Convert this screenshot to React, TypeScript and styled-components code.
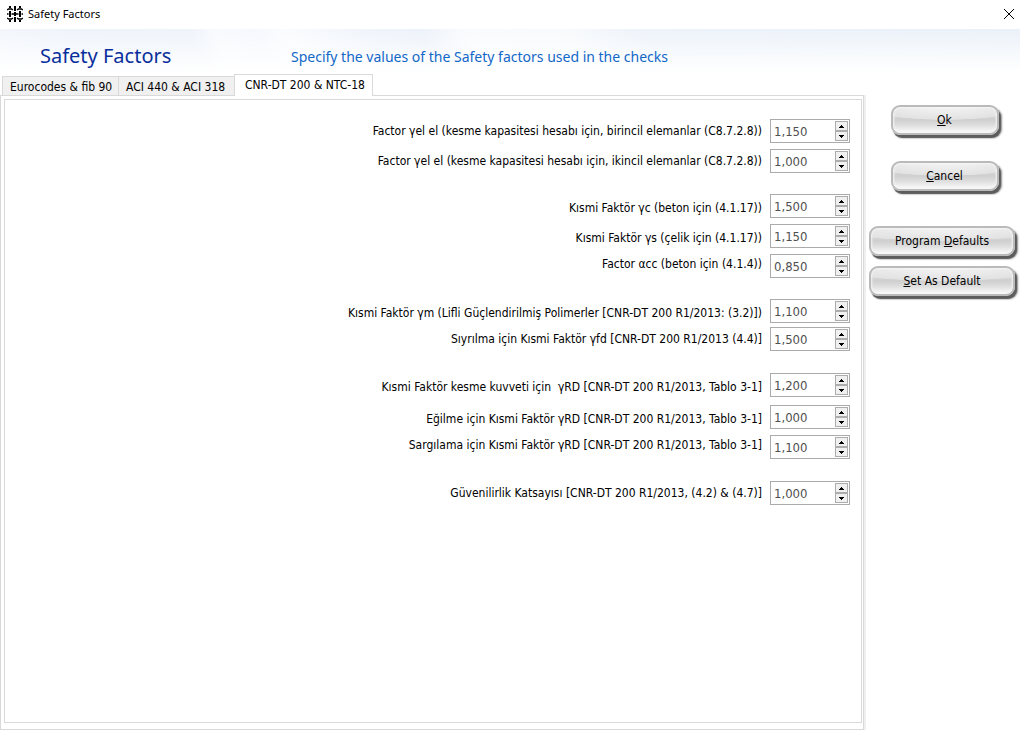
import React, { useId, useState } from "react";
import styled, { createGlobalStyle } from "styled-components";

const uiFont = '"DejaVu Sans Condensed", "DejaVu Sans", sans-serif';
const titleFont = '"Noto Sans", "Open Sans", sans-serif';
const frame = "#d9d9d9";

const GlobalStyle = createGlobalStyle`
  *, *::before, *::after { box-sizing: border-box; }
  body {
    margin: 0;
    background: #fff;
    color: #000;
    font-family: ${uiFont};
    font-size: 12px;
  }
  button, input { font: inherit; color: inherit; margin: 0; }
`;

const Dialog = styled.div`
  display: flex;
  flex-direction: column;
  min-height: 100vh;
`;

const TitleBar = styled.header`
  display: flex;
  align-items: center;
  gap: 5px;
  height: 29px;
  padding: 0 5px 2px 7px;
  font-family: ${titleFont};
  font-size: 11px;
`;

const TitleText = styled.span`
  flex: 1;
`;

const CloseButton = styled.button`
  display: flex;
  padding: 0;
  border: 0;
  background: none;
`;

const Banner = styled.div`
  display: flex;
  align-items: center;
  height: 45px;
  padding: 8px 40px 0;
  font-family: ${titleFont};
  background:
    linear-gradient(to bottom, transparent, #fff 95%),
    linear-gradient(65deg, #f4f7fc 0, #eff4fb 80px, #eef3fa 190px, #f8fafe 212px, #f5f8fd 250px, #fafcfe 275px, #f0f4fb 350px, #edf2fa 400px, #fafbfe 440px, #f8fafd 530px, #edf3fa 600px, #ebf1f9 100%);
`;

const Heading = styled.h1`
  margin: 0;
  width: 251px;
  color: #0a2f9c;
  font-size: 20px;
  line-height: 28px;
  font-weight: 400;
`;

const Hint = styled.p`
  margin: 0;
  padding-top: 2px;
  color: #1268c8;
  font-size: 14px;
  line-height: 20px;
`;

const Body = styled.div`
  display: grid;
  grid-template-columns: minmax(0, 1fr) 154px;
  flex: 1;
`;

const Pages = styled.main`
  display: flex;
  flex-direction: column;
`;

const TabList = styled.div`
  display: flex;
  align-items: flex-end;
  height: 21px;
  padding-left: 2px;
`;

const Tab = styled.button<{ $active: boolean }>`
  min-width: ${(p) => (p.$active ? 139 : 116)}px;
  height: ${(p) => (p.$active ? 22 : 19)}px;
  margin-bottom: ${(p) => (p.$active ? -1 : 0)}px;
  padding: ${(p) => (p.$active ? "0 3px 1px 10px" : "2px 3px 0 7px")};
  border: 1px solid ${frame};
  border-bottom: 0;
  border-right-width: ${(p) => (p.$active ? 1 : 0)}px;
  background: ${(p) => (p.$active ? "#fff" : "#f0f0f0")};
  text-align: left;
  white-space: nowrap;
  line-height: 16px;
  z-index: ${(p) => (p.$active ? 1 : 0)};
`;

const Page = styled.section`
  display: flex;
  flex: 1;
  margin-right: 2px;
  padding: 3px 1px 6px 3px;
  border: 1px solid ${frame};
  box-shadow: 2px 0 #efefef;
`;

const PageInner = styled.div`
  flex: 1;
  display: flex;
  flex-direction: column;
  padding: 19px 11px 19px 0;
  border: 1px solid ${frame};
`;

type Align = "flex-start" | "center" | "flex-end";

const FieldRow = styled.div<{ $gap: number; $align: Align }>`
  display: flex;
  justify-content: flex-end;
  align-items: ${(p) => p.$align};
  gap: 8px;
  margin-top: ${(p) => p.$gap}px;
`;

const FieldLabel = styled.label`
  line-height: 20px;
  white-space: pre;
`;

const SpinBox = styled.div`
  display: flex;
  width: 80px;
  height: 24px;
  padding: 1px;
  border: 1px solid #ababab;
  background: #fff;
`;

const SpinInput = styled.input`
  flex: 1;
  min-width: 0;
  padding: 0 0 0 2px;
  border: 0;
  outline: 0;
  background: none;
  color: #505050;
  font-size: 13px;
`;

const SpinButtons = styled.div`
  display: flex;
  flex-direction: column;
  width: 13px;
`;

const SpinButton = styled.button`
  display: flex;
  flex: 1;
  align-items: center;
  justify-content: center;
  padding: 0;
  border: 1px solid #adadad;
  background: #f0f0f0;
`;

const Sidebar = styled.aside`
  display: flex;
  flex-direction: column;
  align-items: center;
  gap: 10px;
  padding: 31px 5px 0 3px;
`;

const AnswerButtons = styled.div`
  display: flex;
  flex-direction: column;
  gap: 26px;
  padding: 0 0 25px 5px;
`;

const GlossyButton = styled.button<{ $wide?: boolean }>`
  width: ${(p) => (p.$wide ? 146 : 108)}px;
  height: 30px;
  padding: 0;
  border: 2px solid #bababa;
  border-radius: 9px;
  background:
    radial-gradient(ellipse 75% 50% at 50% 0, #f4f4f4 0, #e2e2e2 96%, transparent 100%),
    linear-gradient(to bottom, #e6e6e6 0, #cfcfcf 50%, #dedede 70%, #fcfcfc 100%);
  box-shadow:
    inset 0 0 2px 1px #f6f6f6,
    2px 3px 1px #5c5c5c,
    3px 3px 2px #999;
  line-height: 16px;
`;

const AppIcon = () => (
  <svg width="16" height="16" viewBox="0 0 16 16" fill="none" stroke="#000" aria-hidden="true">
    <path strokeWidth="2" d="M3 0v2M3 5v6M3 14v2M8 0v5M8 6v4M8 11v5M13 0v2M13 5v6M13 14v2" />
    <path
      strokeWidth="1.4"
      d="M0 4l1.500-1h3l1.500 1M10 4l1.500-1h3l1.500 1M0 8h1.500M4.500 8h7M14.500 8h1.500M0 12l1.500 1h3l1.500-1M10 12l1.500 1h3l1.500-1"
    />
  </svg>
);

const CloseIcon = () => (
  <svg width="12" height="12" viewBox="0 0 12 12" fill="none" stroke="#000" aria-hidden="true">
    <path d="M1 1l10 10M11 1L1 11" />
  </svg>
);

const Arrow = ({ up }: { up?: boolean }) => (
  <svg width="7" height="3" viewBox="0 0 7 3" shapeRendering="crispEdges" aria-hidden="true">
    <path d={up ? "M3 0h1v1h1v1h1v1h-5v-1h1v-1h1z" : "M1 0h5v1h-1v1h-1v1h-1v-1h-1v-1h-1z"} />
  </svg>
);

type Field = { label: string; value: string; gap: number; align: Align };

const fields: Field[] = [
  { label: "Factor γel el (kesme kapasitesi hesabı için, birincil elemanlar (C8.7.2.8))", value: "1,150", gap: 0, align: "center" },
  { label: "Factor γel el (kesme kapasitesi hesabı için, ikincil elemanlar (C8.7.2.8))", value: "1,000", gap: 6, align: "center" },
  { label: "Kısmi Faktör γc (beton için (4.1.17))", value: "1,500", gap: 21, align: "flex-end" },
  { label: "Kısmi Faktör γs (çelik için (4.1.17))", value: "1,150", gap: 6, align: "flex-end" },
  { label: "Factor αcc (beton için (4.1.4))", value: "0,850", gap: 6, align: "flex-start" },
  { label: "Kısmi Faktör γm (Lifli Güçlendirilmiş Polimerler [CNR-DT 200 R1/2013: (3.2)])", value: "1,100", gap: 21, align: "flex-end" },
  { label: "Sıyrılma için Kısmi Faktör γfd [CNR-DT 200 R1/2013 (4.4)]", value: "1,500", gap: 4, align: "center" },
  { label: "Kısmi Faktör kesme kuvveti için  γRD [CNR-DT 200 R1/2013, Tablo 3-1]", value: "1,200", gap: 22, align: "flex-end" },
  { label: "Eğilme için Kısmi Faktör γRD [CNR-DT 200 R1/2013, Tablo 3-1]", value: "1,000", gap: 8, align: "flex-end" },
  { label: "Sargılama için Kısmi Faktör γRD [CNR-DT 200 R1/2013, Tablo 3-1]", value: "1,100", gap: 6, align: "flex-start" },
  { label: "Güvenilirlik Katsayısı [CNR-DT 200 R1/2013, (4.2) & (4.7)]", value: "1,000", gap: 22, align: "center" },
];

const format = (n: number) => n.toFixed(3).replace(".", ",");

function SpinField({ field }: { field: Field }) {
  const id = useId();
  const [value, setValue] = useState(field.value);
  const step = (by: number) =>
    setValue((v) => format((parseFloat(v.replace(",", ".")) || 0) + by));
  return (
    <FieldRow $gap={field.gap} $align={field.align}>
      <FieldLabel htmlFor={id}>{field.label}</FieldLabel>
      <SpinBox>
        <SpinInput id={id} value={value} onChange={(e) => setValue(e.target.value)} />
        <SpinButtons>
          <SpinButton type="button" aria-label="Increase" onClick={() => step(0.05)}>
            <Arrow up />
          </SpinButton>
          <SpinButton type="button" aria-label="Decrease" onClick={() => step(-0.05)}>
            <Arrow />
          </SpinButton>
        </SpinButtons>
      </SpinBox>
    </FieldRow>
  );
}

const tabs = ["Eurocodes & fib 90", "ACI 440 & ACI 318", "CNR-DT 200 & NTC-18"];

export default function App() {
  const [active, setActive] = useState(2);
  return (
    <Dialog>
      <GlobalStyle />
      <TitleBar>
        <AppIcon />
        <TitleText>Safety Factors</TitleText>
        <CloseButton type="button" aria-label="Close">
          <CloseIcon />
        </CloseButton>
      </TitleBar>
      <Banner>
        <Heading>Safety Factors</Heading>
        <Hint>Specify the values of the Safety factors used in the checks</Hint>
      </Banner>
      <Body>
        <Pages>
          <TabList role="tablist">
            {tabs.map((name, i) => (
              <Tab
                key={name}
                type="button"
                role="tab"
                aria-selected={i === active}
                $active={i === active}
                onClick={() => setActive(i)}
              >
                {name}
              </Tab>
            ))}
          </TabList>
          <Page role="tabpanel">
            <PageInner>
              {fields.map((f) => (
                <SpinField key={f.label} field={f} />
              ))}
            </PageInner>
          </Page>
        </Pages>
        <Sidebar>
          <AnswerButtons>
            <GlossyButton type="button">
              <u>O</u>k
            </GlossyButton>
            <GlossyButton type="button">
              <u>C</u>ancel
            </GlossyButton>
          </AnswerButtons>
          <GlossyButton type="button" $wide>
            Program <u>D</u>efaults
          </GlossyButton>
          <GlossyButton type="button" $wide>
            <u>S</u>et As Default
          </GlossyButton>
        </Sidebar>
      </Body>
    </Dialog>
  );
}
